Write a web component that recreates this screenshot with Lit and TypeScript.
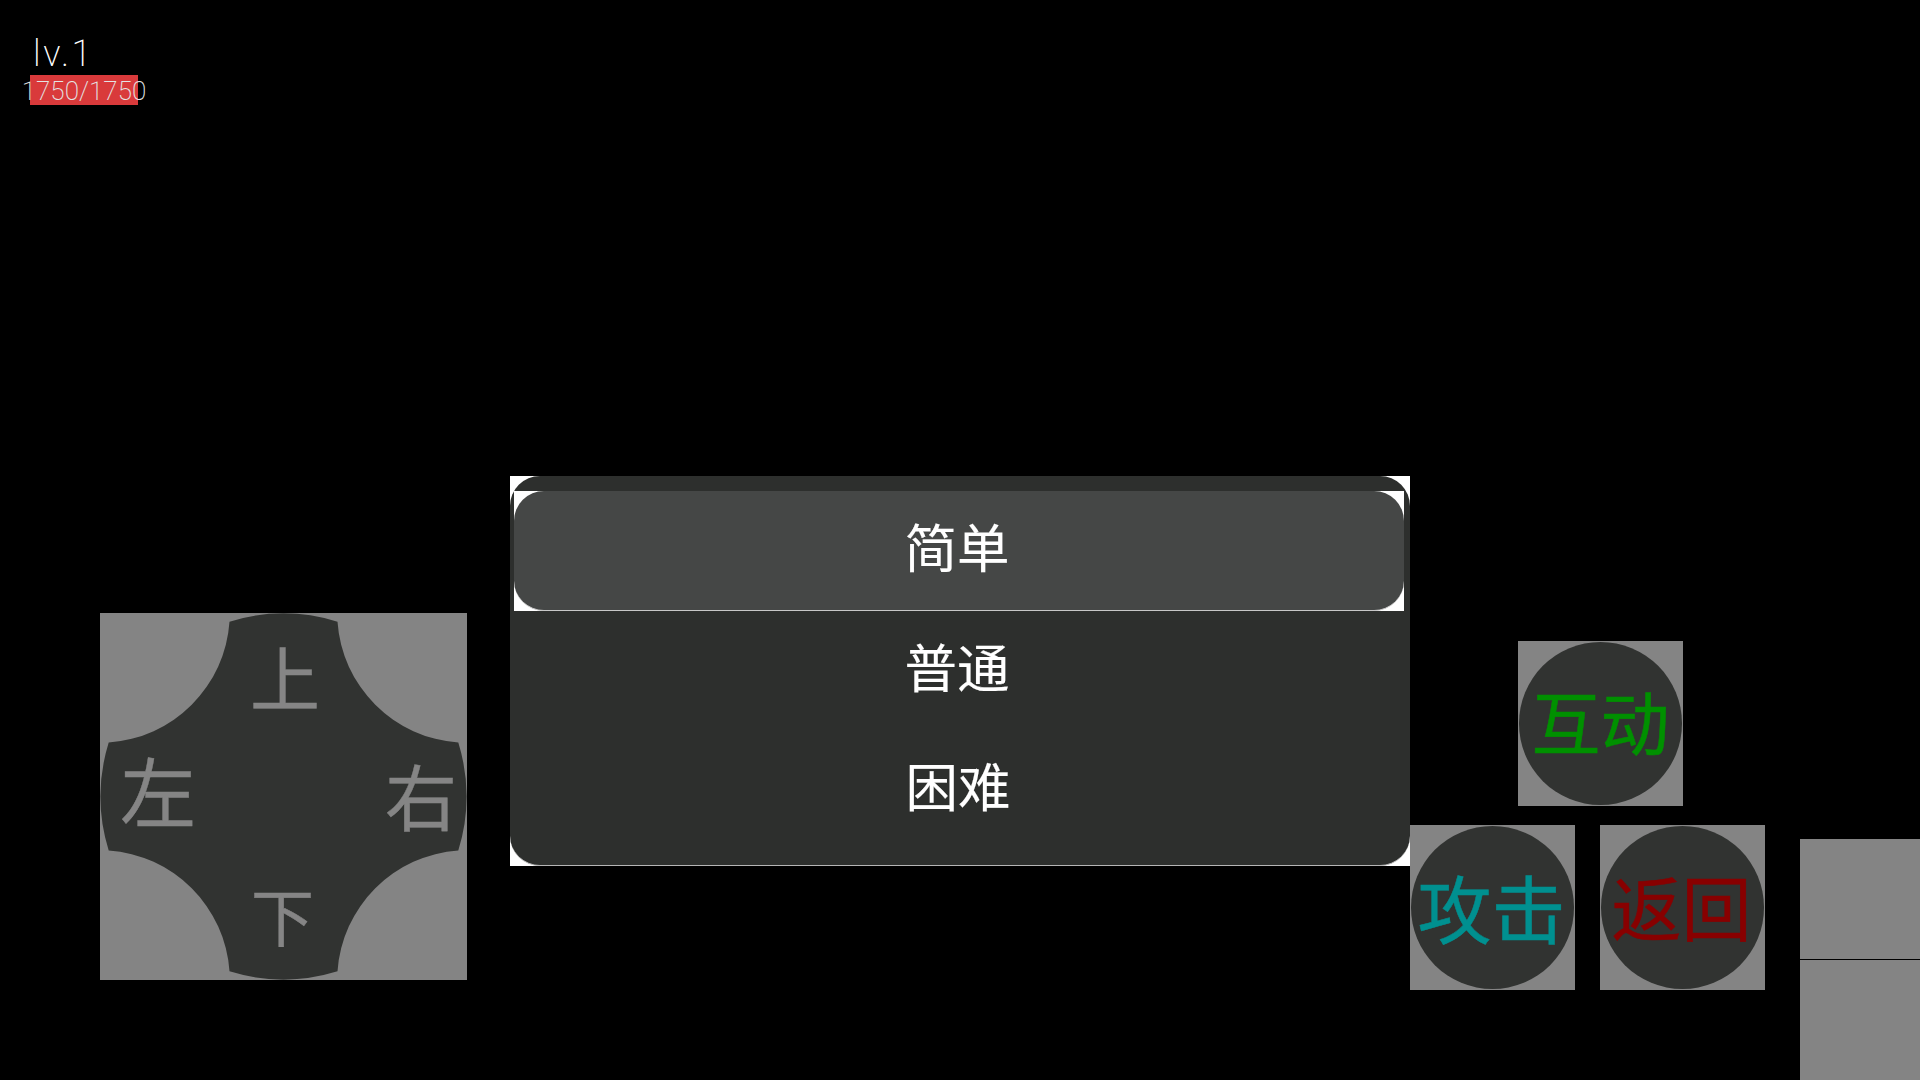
import { LitElement, html, css } from "lit";
import { customElement } from "lit/decorators.js";

@customElement("app-root")
export class AppRoot extends LitElement {
  static styles = css`
    :host { display: block; width: 1920px; height: 1080px; background: #000; overflow: hidden; font-family: "Noto Sans CJK SC", "Noto Sans", sans-serif; }
    .stage { width: 1920px; height: 1080px; display: flex; flex-direction: column; }
    .hud { height: 105px; padding: 28px 0 0 30px; box-sizing: border-box; flex: none; }
    .level { height: 47px; padding: 3px 0 0 3px; box-sizing: border-box; font-family: Roboto, sans-serif; font-weight: 200; font-size: 36px; line-height: 47px; letter-spacing: 2.5px; color: #fff; }
    .hp { width: 108px; height: 30px; background: #d93a3b; display: flex; justify-content: center; align-items: center; white-space: nowrap; font-family: Roboto, sans-serif; font-weight: 200; font-size: 26px; line-height: 30px; padding-top: 2px; box-sizing: border-box; color: #e4e4e4; }
    .field { flex: 1; display: flex; align-items: flex-start; }
    .dpad { position: relative; width: 367px; height: 367px; margin: 508px 0 0 100px; background: #848484; flex: none; }
    .dpad svg { display: block; width: 367px; height: 367px; }
    .dir { position: absolute; color: #858585; line-height: 1; -webkit-text-stroke: 0.4px #858585; }
    .up { left: 150px; top: 28px; font-size: 70px; }
    .left { left: 20px; top: 138px; font-size: 76px; }
    .right { left: 285px; top: 145px; font-size: 72px; }
    .down { left: 151px; top: 269px; font-size: 63px; }
    .dialog { width: 900px; height: 390px; margin: 371px 0 0 43px; background: #fff; flex: none; }
    .panel { height: 100%; box-sizing: border-box; padding: 15px 6px 15px 4px; background: #2d2f2d; border-radius: 30px; border-bottom: 1px solid #b5b5b5; display: flex; flex-direction: column; }
    .row { height: 120px; flex: none; display: flex; justify-content: center; align-items: center; box-sizing: border-box; color: #fff; font-size: 52.5px; line-height: 1; padding: 0 4px 10px 0; -webkit-text-stroke: 0.15px #fff; }
    .normal { padding-bottom: 12px; }
    .hard { padding: 0 2px 13px 0; }
    .sel-wrap { background: #fff; flex: none; height: 120px; }
    .sel { background: #454746; border-radius: 30px; border-bottom: 1px solid #c8c8c8; }
    .controls { flex: none; width: 355px; margin-top: 536px; display: flex; flex-direction: column; gap: 19px; }
    .ctop { padding-left: 108px; }
    .cbot { display: flex; gap: 25px; }
    .btn { width: 165px; height: 165px; background: #848484; display: flex; align-items: center; justify-content: center; flex: none; }
    .disc { width: 163px; height: 163px; border-radius: 50%; background: #313331; display: flex; align-items: center; justify-content: center; line-height: 1; white-space: nowrap; box-sizing: border-box; }
    .g { color: #009000; font-size: 69px; padding-bottom: 7px; -webkit-text-stroke: 0.5px #009000; }
    .t { color: #009090; font-size: 74px; padding: 0 2px 4px 0; -webkit-text-stroke: 0.5px #009090; }
    .r { color: #880000; font-size: 70px; padding: 0 2px 4px 0; -webkit-text-stroke: 0.5px #880000; }
    .side { flex: none; margin: 734px 0 0 35px; width: 120px; display: flex; flex-direction: column; gap: 1px; }
    .pad { height: 120px; background: #848484; }
  `;

  render() {
    return html`<div class="stage">
      <div class="hud">
        <div class="level">lv.1</div>
        <div class="hp">1750/1750</div>
      </div>
      <div class="field">
        <div class="dpad">
          <svg viewBox="0 0 367 367">
            <path fill="#313331" d="M129.5 8.7A183 183 0 0 1 237.5 8.7A130 130 0 0 0 358.3 129.5A183 183 0 0 1 358.3 237.5A130 130 0 0 0 237.5 358.3A183 183 0 0 1 129.5 358.3A130 130 0 0 0 8.7 237.5A183 183 0 0 1 8.7 129.5A130 130 0 0 0 129.5 8.7Z"/>
          </svg>
          <span class="dir up">上</span>
          <span class="dir left">左</span>
          <span class="dir right">右</span>
          <span class="dir down">下</span>
        </div>
        <div class="dialog">
          <div class="panel">
            <div class="sel-wrap"><div class="row sel">简单</div></div>
            <div class="row normal">普通</div>
            <div class="row hard">困难</div>
          </div>
        </div>
        <div class="controls">
          <div class="ctop"><div class="btn"><div class="disc g">互动</div></div></div>
          <div class="cbot">
            <div class="btn"><div class="disc t">攻击</div></div>
            <div class="btn"><div class="disc r">返回</div></div>
          </div>
        </div>
        <div class="side"><div class="pad"></div><div class="pad"></div></div>
      </div>
    </div>`;
  }
}
